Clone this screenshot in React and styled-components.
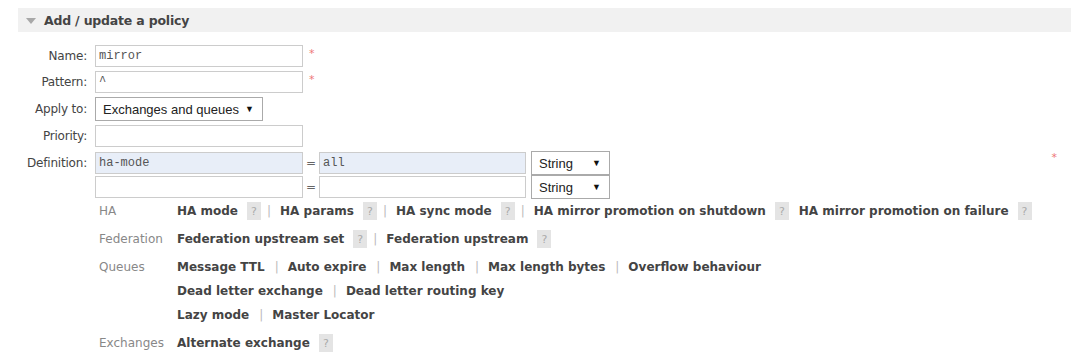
import React from 'react'
import styled, { createGlobalStyle } from 'styled-components'

const GlobalStyle = createGlobalStyle`
  body {
    margin: 0;
    background: #fff;
    font-family: Verdana, "DejaVu Sans", sans-serif;
    color: #444;
  }
`

const helpGroups = [
  {
    name: 'HA',
    lines: [
      [
        { label: 'HA mode', help: true },
        { label: 'HA params', help: true },
        { label: 'HA sync mode', help: true },
        { label: 'HA mirror promotion on shutdown', help: true, noSep: true },
        { label: 'HA mirror promotion on failure', help: true },
      ],
    ],
  },
  {
    name: 'Federation',
    lines: [
      [
        { label: 'Federation upstream set', help: true },
        { label: 'Federation upstream', help: true },
      ],
    ],
  },
  {
    name: 'Queues',
    lines: [
      [
        { label: 'Message TTL' },
        { label: 'Auto expire' },
        { label: 'Max length' },
        { label: 'Max length bytes' },
        { label: 'Overflow behaviour' },
      ],
      [{ label: 'Dead letter exchange' }, { label: 'Dead letter routing key' }],
      [{ label: 'Lazy mode' }, { label: 'Master Locator' }],
    ],
  },
  {
    name: 'Exchanges',
    lines: [[{ label: 'Alternate exchange', help: true }]],
  },
]

function App() {
  return (
    <>
      <GlobalStyle />
      <Page>
        <SectionHeader>
          <Triangle />
          <Title>Add / update a policy</Title>
        </SectionHeader>
        <Form>
          <Label>Name:</Label>
          <Field>
            <TextInput defaultValue="mirror" />
            <Mandatory>*</Mandatory>
          </Field>
          <Label>Pattern:</Label>
          <Field>
            <TextInput defaultValue="^" />
            <Mandatory>*</Mandatory>
          </Field>
          <Label>Apply to:</Label>
          <Field>
            <Select width={168}>
              Exchanges and queues <Arrow>▼</Arrow>
            </Select>
          </Field>
          <Label>Priority:</Label>
          <Field>
            <TextInput />
          </Field>
          <Label top>Definition:</Label>
          <Definition>
            <DefRows>
              <DefRow>
                <TextInput filled defaultValue="ha-mode" />
                <Equals>=</Equals>
                <TextInput filled defaultValue="all" />
                <Select width={79}>
                  String <Arrow>▼</Arrow>
                </Select>
              </DefRow>
              <DefRow>
                <TextInput />
                <Equals>=</Equals>
                <TextInput />
                <Select width={79}>
                  String <Arrow>▼</Arrow>
                </Select>
              </DefRow>
            </DefRows>
            <DefMandatory>*</DefMandatory>
          </Definition>
        </Form>
        <HelpTable>
          {helpGroups.map((g) => (
            <React.Fragment key={g.name}>
              <GroupName>{g.name}</GroupName>
              <GroupLines>
                {g.lines.map((line, i) => (
                  <HelpLine key={i}>
                    {line.map((item, j) => {
                      const last = j === line.length - 1
                      return (
                        <React.Fragment key={item.label}>
                          <HelpLink>{item.label}</HelpLink>
                          {item.help && <HelpBadge gapAfter={!last && item.noSep}>?</HelpBadge>}
                          {!last && !item.noSep && <Sep afterBadge={item.help}>|</Sep>}
                        </React.Fragment>
                      )
                    })}
                  </HelpLine>
                ))}
              </GroupLines>
            </React.Fragment>
          ))}
        </HelpTable>
      </Page>
    </>
  )
}

const Page = styled.div`
  padding: 8px 0 0 18px;
`

const SectionHeader = styled.div`
  display: flex;
  align-items: center;
  height: 24px;
  background: #f1f1f1;
  padding-left: 8px;
`

const Triangle = styled.span`
  width: 0;
  height: 0;
  border-left: 5px solid transparent;
  border-right: 5px solid transparent;
  border-top: 6px solid #a8a8a8;
  margin-top: 1px;
`

const Title = styled.h2`
  margin: 0 0 0 8px;
  font-size: 12.5px;
  letter-spacing: -0.2px;
  font-weight: bold;
  color: #444;
  font-family: Verdana, "DejaVu Sans", sans-serif;
`

const Form = styled.div`
  display: grid;
  grid-template-columns: 69px 1fr;
  column-gap: 8px;
  row-gap: 4px;
  margin-top: 13px;
  align-items: center;
`

const Label = styled.label`
  text-align: right;
  font-size: 12px;
  color: #444;
  align-self: ${(p) => (p.top ? 'start' : 'center')};
  padding-top: ${(p) => (p.top ? '5px' : '0')};
  font-family: "DejaVu Sans", sans-serif;
  letter-spacing: -0.2px;
`

const Field = styled.div`
  display: flex;
  align-items: flex-start;
`

const TextInput = styled.input`
  box-sizing: border-box;
  width: 208px;
  height: 22px;
  border: 1px solid #ccc;
  background: ${(p) => (p.filled ? '#e8eef8' : '#fff')};
  font-family: "Liberation Mono", "Courier New", monospace;
  font-size: 12px;
  color: #555;
  padding: 0 3px;
  margin: 0;
  outline: none;
`

const Mandatory = styled.span`
  color: #e77;
  font-size: 11px;
  margin-left: 6px;
  margin-top: 2px;
`

const Select = styled.div`
  box-sizing: border-box;
  width: ${(p) => p.width}px;
  height: 24px;
  border: 1px solid #aaa;
  background: #fff;
  display: flex;
  align-items: center;
  justify-content: space-between;
  padding: 0 8px 0 7px;
  font-family: "Liberation Sans", Arial, sans-serif;
  font-size: 13px;
  color: #222;
`

const Arrow = styled.span`
  font-size: 9px;
  color: #111;
`

const Definition = styled.div`
  display: flex;
  align-items: flex-start;
`

const DefRows = styled.div`
  display: flex;
  flex-direction: column;
`

const DefRow = styled.div`
  display: flex;
  align-items: center;
  height: 24px;
  & > input:first-child {
    width: 208px;
  }
  & > input:nth-child(3) {
    width: 207px;
  }
  & > div {
    margin-left: 5px;
  }
`

const Equals = styled.span`
  width: 16px;
  text-align: center;
  font-size: 12px;
  color: #666;
`

const DefMandatory = styled.span`
  margin-left: auto;
  margin-right: 14px;
  color: #e77;
  font-size: 11px;
`

const HelpTable = styled.div`
  display: grid;
  grid-template-columns: 78px 1fr;
  row-gap: 6px;
  margin: 1px 0 0 81px;
`

const GroupName = styled.div`
  font-size: 12px;
  color: #888;
  line-height: 22px;
  font-family: "DejaVu Sans", sans-serif;
`

const GroupLines = styled.div`
  display: flex;
  flex-direction: column;
  gap: 2px;
`

const HelpLine = styled.div`
  display: flex;
  align-items: center;
  height: 22px;
  white-space: nowrap;
`

const HelpLink = styled.span`
  font-size: 12px;
  font-weight: bold;
  color: #444;
  font-family: "DejaVu Sans", sans-serif;
`

const HelpBadge = styled.span`
  display: inline-flex;
  align-items: center;
  justify-content: center;
  width: 14px;
  height: 18px;
  margin-left: 9px;
  margin-right: ${(p) => (p.gapAfter ? '10px' : '0')};
  background: #e4e4e4;
  color: #aaa;
  font-size: 11px;
  font-family: "DejaVu Sans", sans-serif;
`

const Sep = styled.span`
  margin: 0 9px 0 ${(p) => (p.afterBadge ? '6px' : '10px')};
  color: #bbb;
  font-size: 12px;
`

export default App
